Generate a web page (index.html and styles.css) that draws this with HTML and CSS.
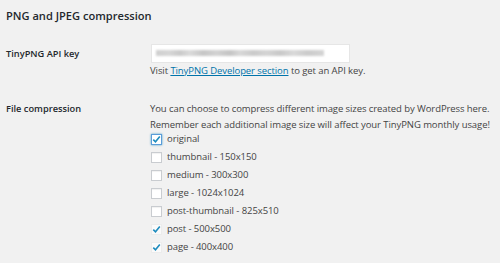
FILE: index.html
```html
<!DOCTYPE html>
<html>
<head>
<meta charset="utf-8">
<link rel="stylesheet" href="styles.css">
</head>
<body>
<h2 class="title">PNG and JPEG compression</h2>
<div class="form">
  <div class="label label-key">TinyPNG API key</div>
  <div class="field">
    <div class="input"><div class="blur"></div></div>
    <p class="help">Visit <a href="#">TinyPNG Developer section</a> to get an API key.</p>
  </div>
  <div class="label label-files">File compression</div>
  <div class="field">
    <p class="desc">You can choose to compress different image sizes created by WordPress here.<br>Remember each additional image size will affect your TinyPNG monthly usage!</p>
    <ul class="checks">
      <li><span class="box focus checked"><svg viewBox="0 0 11 11"><path d="M2.3 5.6 L4.5 7.8 L8.8 2.6" /></svg></span>original</li>
      <li><span class="box"></span>thumbnail - 150x150</li>
      <li><span class="box"></span>medium - 300x300</li>
      <li><span class="box"></span>large - 1024x1024</li>
      <li><span class="box"></span>post-thumbnail - 825x510</li>
      <li><span class="box checked light"><svg viewBox="0 0 11 11"><path d="M2.3 5.6 L4.5 7.8 L8.8 2.6" /></svg></span>post - 500x500</li>
      <li><span class="box checked light"><svg viewBox="0 0 11 11"><path d="M2.3 5.6 L4.5 7.8 L8.8 2.6" /></svg></span>page - 400x400</li>
    </ul>
  </div>
</div>
</body>
</html>
```

FILE: styles.css
```css
html, body {
  margin: 0;
  padding: 0;
  background: #f1f1f1;
}
body {
  font-family: "Open Sans", "Liberation Sans", sans-serif;
  font-size: 9.5px;
  letter-spacing: -0.08px;
  color: #444;
  padding: 8px 6px 0 6px;
  width: 500px;
  height: 263px;
  box-sizing: border-box;
  overflow: hidden;
}
.title {
  margin: 0;
  font-size: 11.1px;
  letter-spacing: 0;
  line-height: 15px;
  font-weight: 600;
  color: #23282d;
}
.form {
  display: grid;
  grid-template-columns: 145px 1fr;
  margin-top: 21px;
  row-gap: 23px;
}
.label {
  font-size: 9.25px;
  letter-spacing: 0;
  font-weight: 600;
  color: #23282d;
}
.label-key {
  line-height: 19px;
}
.label-files {
  line-height: 15.5px;
}
.field {
  min-width: 0;
}
.input {
  width: 199px;
  height: 19px;
  box-sizing: border-box;
  background: #fff;
  border: 1px solid #e6e6e6;
  padding: 5px 0 0 4px;
}
.blur {
  width: 168px;
  height: 6px;
  filter: blur(1.2px);
  background: linear-gradient(90deg,
    #cfcfcf 0, #d6d6d6 8%, #c9c9c9 14%, #dadada 20%, #c6c6c6 28%,
    #d2d2d2 36%, #c4c4c4 44%, #d8d8d8 50%, #cacaca 58%, #d4d4d4 66%,
    #c8c8c8 74%, #d9d9d9 82%, #cbcbcb 90%, #d5d5d5 100%);
}
.help {
  margin: 1px 0 0 -1px;
  line-height: 14px;
  white-space: nowrap;
}
.help a {
  color: #0073aa;
  text-decoration: underline;
}
.desc {
  margin: 0 0 0 -1px;
  line-height: 15.5px;
  white-space: nowrap;
}
.checks {
  list-style: none;
  margin: -2px 0 0 0;
  padding: 0;
}
.checks li {
  display: flex;
  align-items: center;
  height: 18px;
  line-height: 18px;
  white-space: nowrap;
}
.box {
  width: 11px;
  height: 11px;
  box-sizing: border-box;
  background: #fff;
  border: 1px solid #c9ccd0;
  box-shadow: inset 0 1px 1px rgba(0,0,0,0.06);
  margin-right: 5px;
  flex: none;
  display: flex;
  align-items: center;
  justify-content: center;
}
.box svg {
  width: 11px;
  height: 11px;
  flex: none;
}
.box path {
  fill: none;
  stroke: #1e8cbe;
  stroke-width: 1.6;
}
.box.focus {
  border-color: #5b9dd9;
  box-shadow: 0 0 2px rgba(30,140,190,0.8);
}
.box.light {
  border-color: #ececec;
  background: #fafafa;
  box-shadow: none;
}
```
